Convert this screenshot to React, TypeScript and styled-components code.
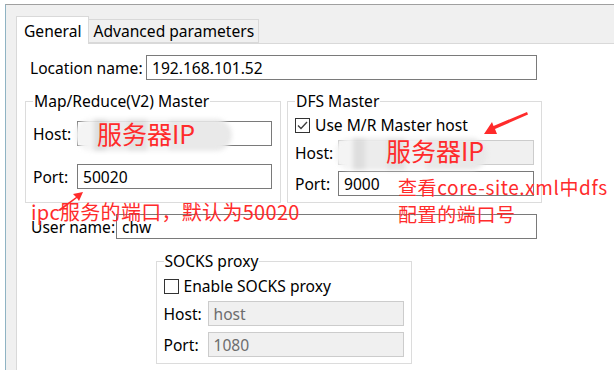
import React from 'react';
import styled, { createGlobalStyle } from 'styled-components';

const GlobalStyle = createGlobalStyle`
  html, body {
    margin: 0;
    padding: 0;
    background: #ffffff;
  }
  body {
    font-family: "Noto Sans", "Liberation Sans", sans-serif;
    font-size: 15.6px;
    color: #000000;
  }
`;

const Page = styled.div`
  position: relative;
  width: 614px;
  height: 370px;
  overflow: hidden;
  box-sizing: border-box;
  padding: 4px 0 0 5px;
`;

const Frame = styled.div`
  height: 100%;
  box-sizing: border-box;
  border-top: 1px solid #a0a0a0;
  border-left: 1px solid #8fb3c3;
  background: #f0f0f0;
  padding-left: 10px;
  display: flex;
  flex-direction: column;
`;

const TabStrip = styled.div`
  height: 38px;
  flex: none;
  display: flex;
  align-items: flex-end;
`;

const Tab = styled.div<{ $active?: boolean }>`
  position: relative;
  z-index: 1;
  box-sizing: border-box;
  height: ${(p) => (p.$active ? 28 : 24)}px;
  margin-bottom: ${(p) => (p.$active ? -1 : 0)}px;
  margin-left: ${(p) => (p.$active ? 0 : -1)}px;
  padding: 0 ${(p) => (p.$active ? 7 : 4)}px;
  border: 1px solid #d9d9d9;
  border-bottom: ${(p) => (p.$active ? 'none' : '1px solid #d9d9d9')};
  background: ${(p) => (p.$active ? '#ffffff' : '#f0f0f0')};
  display: flex;
  align-items: center;
  padding-top: ${(p) => (p.$active ? 1 : 0)}px;
  white-space: nowrap;
  &:first-child {
    margin-left: 0;
  }
`;

const Panel = styled.div`
  flex: 1;
  background: #ffffff;
  border-top: 1px solid #d9d9d9;
  border-left: 1px solid #d9d9d9;
  padding: 11px 0 0 8px;
`;

const Content = styled.div`
  width: 517px;
`;

const Row = styled.div<{ $mt?: number; $indent?: number }>`
  display: flex;
  align-items: center;
  margin-top: ${(p) => p.$mt ?? 0}px;
  padding-left: ${(p) => p.$indent ?? 0}px;
`;

const Label = styled.span<{ $w: number }>`
  width: ${(p) => p.$w}px;
  flex: none;
  white-space: nowrap;
`;

const TextBox = styled.input<{ $w: number }>`
  box-sizing: border-box;
  width: ${(p) => p.$w}px;
  height: 25px;
  margin: 0;
  padding: 0 5px;
  border: 1px solid #7a7a7a;
  border-radius: 0;
  background: #ffffff;
  color: #000000;
  font: inherit;
  outline: none;
  &:disabled {
    border-color: #cccccc;
    background: #f0f0f0;
    color: #6d6d6d;
  }
`;

const Groups = styled.div`
  display: grid;
  grid-template-columns: 256px 255px;
  column-gap: 6px;
  margin-top: 12px;
`;

const Group = styled.fieldset<{ $center?: boolean; $w?: number; $pb?: number }>`
  margin: ${(p) => (p.$center ? '13px auto 0' : '0')};
  width: ${(p) => (p.$w ? `${p.$w}px` : 'auto')};
  box-sizing: border-box;
  min-width: 0;
  padding: 0 7px ${(p) => p.$pb ?? 6}px;
  border: 1px solid #dcdcdc;
`;

const Legend = styled.legend`
  padding: 0 1px;
  line-height: 18px;
`;

const CheckRow = styled.label<{ $mt: number }>`
  display: flex;
  align-items: center;
  height: 20px;
  margin-top: ${(p) => p.$mt}px;
  white-space: nowrap;
`;

const CheckBox = styled.span`
  box-sizing: border-box;
  width: 15px;
  height: 15px;
  border: 1px solid #333333;
  background: #ffffff;
  margin-right: 5px;
  display: flex;
  align-items: center;
  justify-content: center;
  svg {
    display: block;
  }
`;

const Note = styled.div<{ $size: number; $x: number; $y: number; $ls?: number }>`
  position: absolute;
  left: ${(p) => p.$x}px;
  top: ${(p) => p.$y}px;
  font-family: "Noto Sans CJK SC", "Noto Sans", sans-serif;
  font-size: ${(p) => p.$size}px;
  line-height: ${(p) => Math.round(p.$size * 1.25)}px;
  letter-spacing: ${(p) => p.$ls ?? 0}px;
  color: #ff2b2b;
  white-space: nowrap;
  z-index: 3;
`;

const Mosaic = styled.div<{ $x: number; $y: number; $w: number; $h: number }>`
  position: absolute;
  left: ${(p) => p.$x}px;
  top: ${(p) => p.$y}px;
  width: ${(p) => p.$w}px;
  height: ${(p) => p.$h}px;
  border-radius: 16px;
  background:
    linear-gradient(90deg, #f4f4f4 0 12%, #dedede 12% 20%, #ececec 20% 34%, #e2e2e2 34% 46%, #f2f2f2 46% 60%, #e9e9e9 60% 100%);
  filter: blur(2px);
  z-index: 2;
`;

const Mark = styled.svg<{ $x: number; $y: number }>`
  position: absolute;
  left: ${(p) => p.$x}px;
  top: ${(p) => p.$y}px;
  z-index: 3;
  overflow: visible;
`;

const Check = () => (
  <svg width="11" height="9" viewBox="0 0 11 9">
    <path d="M1 4.5 L4 7.5 L10 1" fill="none" stroke="#3c3c3c" strokeWidth="1.3" />
  </svg>
);

export default function App() {
  return (
    <Page>
      <GlobalStyle />
      <Frame>
        <TabStrip>
          <Tab $active>General</Tab>
          <Tab>Advanced parameters</Tab>
        </TabStrip>
        <Panel>
          <Content>
            <Row $indent={5}>
              <Label $w={116}>Location name:</Label>
              <TextBox $w={391} readOnly defaultValue="192.168.101.52" />
            </Row>

            <Groups>
              <Group $pb={12}>
                <Legend>Map/Reduce(V2) Master</Legend>
                <Row $mt={11}>
                  <Label $w={44}>Host:</Label>
                  <TextBox $w={195} readOnly defaultValue="" />
                </Row>
                <Row $mt={18}>
                  <Label $w={44}>Port:</Label>
                  <TextBox $w={195} readOnly defaultValue="50020" />
                </Row>
              </Group>
              <Group>
                <Legend>DFS Master</Legend>
                <CheckRow $mt={5}>
                  <CheckBox>
                    <Check />
                  </CheckBox>
                  Use M/R Master host
                </CheckRow>
                <Row $mt={5}>
                  <Label $w={43}>Host:</Label>
                  <TextBox $w={196} disabled defaultValue="" />
                </Row>
                <Row $mt={6}>
                  <Label $w={43}>Port:</Label>
                  <TextBox $w={196} readOnly defaultValue="9000" />
                </Row>
              </Group>
            </Groups>

            <Row $indent={6} $mt={11}>
              <Label $w={85}>User name:</Label>
              <TextBox $w={421} readOnly defaultValue="chw" />
            </Row>

            <Group $center $w={256}>
              <Legend>SOCKS proxy</Legend>
              <CheckRow $mt={6}>
                <CheckBox />
                Enable SOCKS proxy
              </CheckRow>
              <Row $mt={5}>
                <Label $w={44}>Host:</Label>
                <TextBox $w={196} disabled defaultValue="host" />
              </Row>
              <Row $mt={6}>
                <Label $w={44}>Port:</Label>
                <TextBox $w={196} disabled defaultValue="1080" />
              </Row>
            </Group>
          </Content>
        </Panel>
      </Frame>

      <Mark $x={365} $y={-6} width="22" height="10">
        <ellipse cx="10" cy="1" rx="9" ry="4.5" fill="#ff2b2b" />
      </Mark>

      <Mosaic $x={75} $y={119} $w={157} $h={32} />
      <Note $size={25} $x={97} $y={118}>服务器IP</Note>
      <Mark $x={56} $y={190} width="30" height="22">
        <path d="M2 20 L20 7 L17 4 L27 2 L23 11 L21 8 L4 21 Z" fill="#ff2b2b" />
      </Mark>
      <Note $size={20} $x={31} $y={199} $ls={0.3}>ipc服务的端口，默认为50020</Note>

      <Mosaic $x={335} $y={138} $w={152} $h={32} />
      <Note $size={25} $x={386} $y={135}>服务器IP</Note>
      <Mark $x={482} $y={110} width="46" height="28">
        <path d="M45 2 L46 4.5 L13 19 L15 24 L2 24 L10 12 L11.5 16 Z" fill="#ff2b2b" />
      </Mark>
      <Note $size={19} $x={398} $y={175} $ls={0.6}>查看core-site.xml中dfs</Note>
      <Note $size={19} $x={398} $y={202} $ls={0.6}>配置的端口号</Note>
    </Page>
  );
}
